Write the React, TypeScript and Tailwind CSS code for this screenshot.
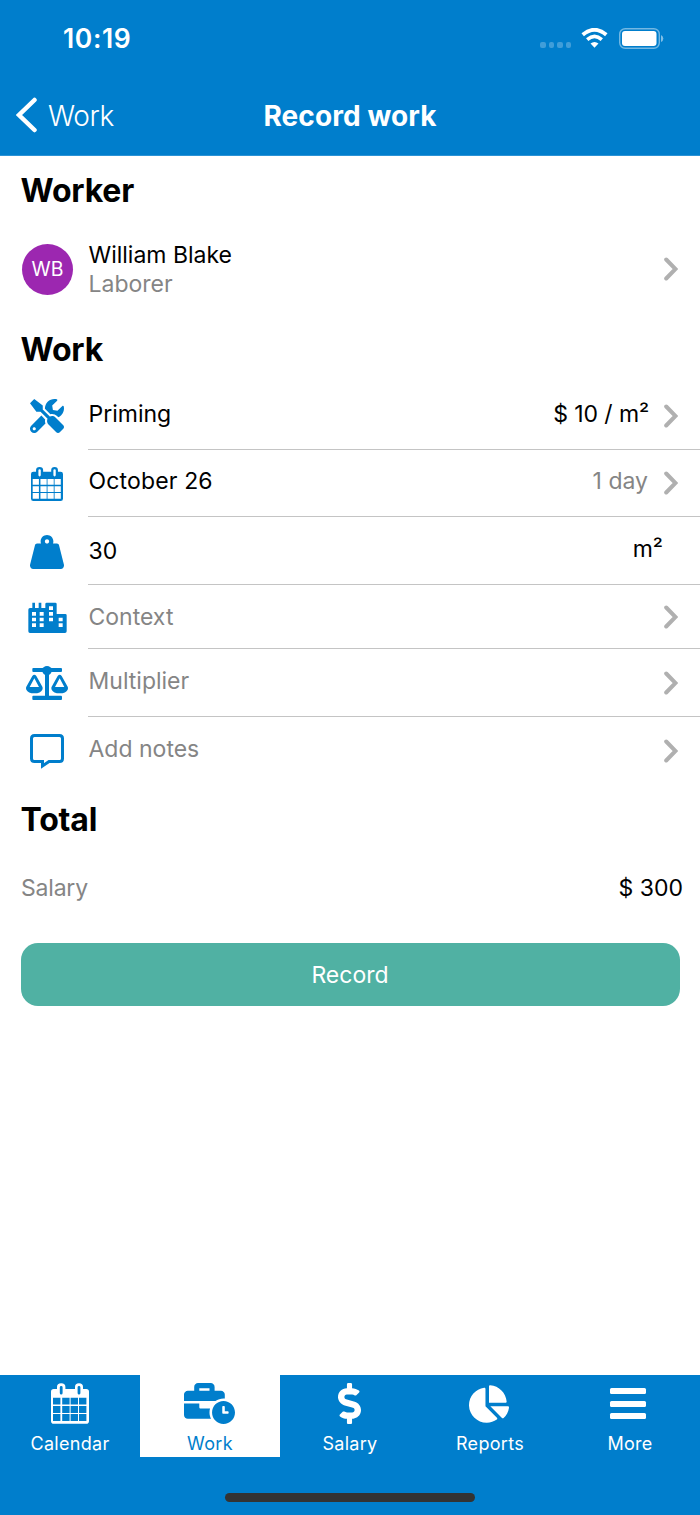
import React from "react";
import {
  FaBusinessTime,
  FaChartPie,
  FaDollarSign,
  FaTools,
  FaWeightHanging,
} from "react-icons/fa";

function CalendarIcon({ className }: { className: string }) {
  const cols = [5, 28, 49, 70];
  const rows = [36, 57, 77];
  const cells = rows
    .map((y) => cols.map((x) => `M${x} ${y}h18.5v17h-18.5z`).join(""))
    .join("");

  return (
    <svg viewBox="0 0 95 101" fill="currentColor" className={className}>
      <path
        fillRule="evenodd"
        d={`M7 14H15V9Q15 0 25.500 0T36 9V14H60V9Q60 0 70 0T80 9V14H88Q95 14 95 21V94Q95 101 88 101H7Q0 101 0 94V21Q0 14 7 14Z M22 10V24Q22 28 25.500 28T29 24V10Q29 7 25.500 7T22 10Z M66.500 10V24Q66.500 28 70 28T73.500 24V10Q73.500 7 70 7T66.500 10Z ${cells}`}
      />
    </svg>
  );
}

function BuildingIcon() {
  return (
    <svg viewBox="0 0 115 93" className="w-[39px] h-[31px]" fill="currentColor">
      <path
        fillRule="evenodd"
        d="M5 18H12V2H20V18H31V2H39V18H51V6Q51 2 55 2H81Q85 2 85 6V36H111Q115 36 115 40V88Q115 93 110 93H5Q0 93 0 88V23Q0 18 5 18Z M11 30h12v11h-12z M34 30h12v11h-12z M11 47h12v11h-12z M34 47h12v11h-12z M11 64h12v11h-12z M34 64h12v11h-12z M62 13h12v11h-12z M62 30h12v11h-12z M62 47h12v11h-12z M91 47h12v11h-12z M91 64h12v11h-12z"
      />
    </svg>
  );
}

function ScaleIcon() {
  return (
    <svg viewBox="0 0 126 102" className="w-[42px] h-[34px]" fill="currentColor">
      <rect x="19" y="6" width="89" height="12" rx="3" />
      <circle cx="63" cy="14" r="14" />
      <rect x="57" y="14" width="12" height="80" />
      <rect x="19" y="89" width="89" height="13" rx="3" />
      <path
        fillRule="evenodd"
        d="M19 30Q25 22 31 30L49 62Q51 66 49 71Q44 82 25 82T1 71Q-1 66 1 62Z M25 37L11 63H39Z"
      />
      <path
        fillRule="evenodd"
        d="M95 30Q101 22 107 30L125 62Q127 66 125 71Q120 82 101 82T77 71Q75 66 77 62Z M101 37L87 63H115Z"
      />
    </svg>
  );
}

function NotesIcon() {
  return (
    <svg viewBox="0 0 34 35" className="w-[34px] h-[35px] mt-[2px]" fill="none">
      <path
        d="M4.500 1.500H29.500Q32.500 1.500 32.500 4.500V24.500Q32.500 27.500 29.500 27.500H19L12.500 32V27.500H4.500Q1.500 27.500 1.500 24.500V4.500Q1.500 1.500 4.500 1.500Z"
        stroke="currentColor"
        strokeWidth="3"
      />
    </svg>
  );
}

function Chevron() {
  return (
    <svg viewBox="0 0 14 24" className="w-[14px] h-6 shrink-0" fill="none">
      <path
        d="M2.200 2.500L11.500 12L2.200 21.500"
        stroke="#b0b0b0"
        strokeWidth="4"
        strokeLinecap="round"
      />
    </svg>
  );
}

function StatusIcons() {
  return (
    <div className="flex items-center">
      <div className="flex gap-[3px] mt-[14px] mr-[10px]">
        {[0, 1, 2, 3].map((dot) => (
          <span key={dot} className="w-[5.5px] h-[6px] rounded-[2px] bg-white/25" />
        ))}
      </div>
      <svg viewBox="0 0 27 20" className="w-[27px] h-5 mr-[11px]" fill="none">
        <path d="M1.700 6.800Q13.500 -3.300 25.300 6.800" stroke="#fff" strokeWidth="3.800" />
        <path d="M6.200 11.600Q13.500 5.300 20.800 11.600" stroke="#fff" strokeWidth="3.600" />
        <path d="M9.500 15.600Q13.500 12.200 17.500 15.600L13.500 19.700Z" fill="#fff" />
      </svg>
      <svg viewBox="0 0 45 21" className="w-[45px] h-[21px]" fill="none">
        <rect x="0.700" y="0.700" width="39.600" height="19.600" rx="5.500" stroke="#fff" strokeOpacity=".45" strokeWidth="1.400" />
        <rect x="3" y="3" width="34.500" height="15" rx="3" fill="#fff" />
        <path d="M42 7Q44.300 8 44.300 10.500T42 14Z" fill="#fff" fillOpacity=".5" />
      </svg>
    </div>
  );
}

type RowProps = {
  icon: React.ReactNode;
  height: string;
  children: React.ReactNode;
  last?: boolean;
};

function Row({ icon, height, children, last }: RowProps) {
  return (
    <div className={`flex shrink-0 ${height}`}>
      <div className="w-[88px] shrink-0 pl-[6px] flex items-center justify-center text-[#007ecc]">
        {icon}
      </div>
      <div
        className={`grow flex items-center pl-[0.500px] pr-[22px] ${
          last ? "" : "border-b border-[#c4c4c4]"
        }`}
      >
        {children}
      </div>
    </div>
  );
}

const tabs = [
  { name: "Calendar", icon: <CalendarIcon className="w-[38px] h-[41px]" /> },
  { name: "Work", icon: <FaBusinessTime className="w-[51px] h-[41px] mr-[2px]" />, active: true },
  { name: "Salary", icon: <FaDollarSign className="w-[23px] h-[41px] mr-px" /> },
  { name: "Reports", icon: <FaChartPie className="w-[40px] h-[38px] mr-[2px]" /> },
  {
    name: "More",
    icon: (
      <div className="w-9 mr-[5px] flex flex-col gap-[6.500px]">
        <span className="h-[6px] rounded-[1.500px] bg-white" />
        <span className="h-[6px] rounded-[1.500px] bg-white" />
        <span className="h-[6px] rounded-[1.500px] bg-white" />
      </div>
    ),
  },
];

function App() {
  return (
    <div className="w-[700px] h-[1515px] flex flex-col bg-white text-black text-[23px] leading-7 font-[Inter,sans-serif]">
      {/* header */}
      <header className="h-[156px] shrink-0 bg-[#007ecc] text-white border-b border-[#2b93d6]">
        <div className="h-[76px] flex items-center justify-between pl-[63px] pr-[36px]">
          <span className="text-[26.500px] font-semibold tracking-[0.600px]">10:19</span>
          <StatusIcons />
        </div>
        <div className="h-[77px] grid grid-cols-3 items-center">
          <div className="flex items-center pl-4 gap-[11px]">
            <svg viewBox="0 0 21 36" className="w-[21px] h-9" fill="none">
              <path
                d="M18.500 3L3 18L18.500 33"
                stroke="#fff"
                strokeWidth="4.500"
                strokeLinecap="round"
              />
            </svg>
            <span className="pt-[2px] text-[28px] font-light tracking-[-0.400px]">Work</span>
          </div>
          <h1 className="pt-[2px] text-[28px] font-bold text-center whitespace-nowrap tracking-[0.100px]">
            Record work
          </h1>
        </div>
      </header>

      {/* worker */}
      <h2 className="h-[70px] shrink-0 pl-[20.500px] flex items-center text-[32px] font-bold tracking-[-0.200px]">
        Worker
      </h2>
      <div className="h-[86px] shrink-0 flex items-center pl-[22px] pr-[22px]">
        <div className="w-[51px] h-[51px] rounded-full bg-[#9c27b0] text-white text-[19.500px] flex items-center justify-center">
          WB
        </div>
        <div className="grow pl-[15.500px] pt-[2px]">
          <p className="leading-[29px]">William Blake</p>
          <p className="leading-[29px] text-[#858585]">Laborer</p>
        </div>
        <Chevron />
      </div>

      {/* work */}
      <h2 className="h-[70px] pt-[5px] shrink-0 pl-[20.500px] flex items-center text-[32px] font-bold tracking-[-0.200px]">
        Work
      </h2>
      <div className="shrink-0 flex flex-col">
        <Row height="h-[68px]" icon={<FaTools className="w-[34px] h-[34px]" />}>
          <span className="grow pb-1">Priming</span>
          <span className="pb-1 pr-[15px] tracking-[-0.100px]">$ 10 / m²</span>
          <Chevron />
        </Row>
        <Row height="h-[67px]" icon={<CalendarIcon className="w-8 h-[34px]" />}>
          <span className="grow pb-1 tracking-[0.150px]">October 26</span>
          <span className="pb-1 pr-4 text-[#858585]">1 day</span>
          <Chevron />
        </Row>
        <Row height="h-[68px]" icon={<FaWeightHanging className="w-[34px] h-[34px] mt-[2px]" />}>
          <span className="grow">30</span>
          <span className="pb-1 pr-[15px]">m²</span>
        </Row>
        <Row height="h-[64px]" icon={<BuildingIcon />}>
          <span className="grow text-[#858585]">Context</span>
          <Chevron />
        </Row>
        <Row height="h-[68px]" icon={<ScaleIcon />}>
          <span className="grow pb-1 text-[#858585]">Multiplier</span>
          <Chevron />
        </Row>
        <Row height="h-[67px]" icon={<NotesIcon />} last>
          <span className="grow pb-1 text-[#858585]">Add notes</span>
          <Chevron />
        </Row>
      </div>

      {/* total */}
      <h2 className="h-[70px] pt-[2px] shrink-0 pl-[20.500px] flex items-center text-[32px] font-bold tracking-[-0.200px]">
        Total
      </h2>
      <div className="h-[68px] shrink-0 flex items-center justify-between pl-[21px] pr-[17px]">
        <span className="text-[#858585] tracking-[-0.200px]">Salary</span>
        <span>$ 300</span>
      </div>
      <button className="mx-[20.500px] mt-[21px] h-[63px] shrink-0 rounded-[17px] bg-[#50b1a3] text-white">
        Record
      </button>

      {/* bottom tabs */}
      <nav className="mt-auto h-[140px] shrink-0 bg-[#007ecc] text-white flex flex-col items-center">
        <div className="w-full h-[82px] grid grid-cols-5">
          {tabs.map((tab) => (
            <div
              key={tab.name}
              className={`flex flex-col items-center ${
                tab.active ? "bg-white text-[#007ecc]" : ""
              }`}
            >
              <div className="h-[57px] flex items-center">{tab.icon}</div>
              <span className="pt-px text-[18px] leading-[22px] tracking-[0.300px]">{tab.name}</span>
            </div>
          ))}
        </div>
        <div className="mt-9 w-[250px] h-[8.500px] rounded-full bg-[#333]" />
      </nav>
    </div>
  );
}

export default App;
